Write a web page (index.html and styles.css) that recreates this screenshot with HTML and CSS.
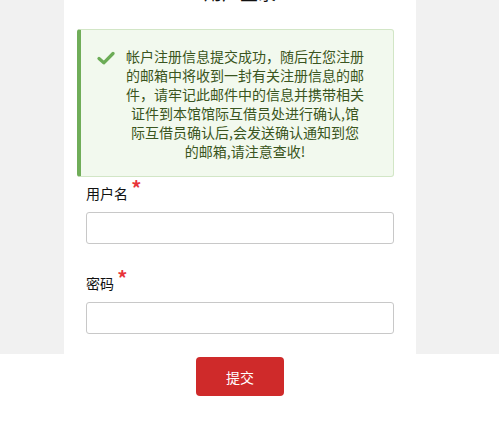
FILE: index.html
```html
<!DOCTYPE html>
<html>
  <head>
    <meta charset="UTF-8" />
    <meta name="viewport" content="width=device-width, initial-scale=1.0" />
    <title>用户登录</title>
    <link rel="stylesheet" href="styles.css">
  </head>
  <body>
    <div class="page">
      <div class="panel">
        <h3 class="title">用户登录</h3>
        <div class="alert">
          <svg class="alert-icon" width="18" height="14" viewBox="0 0 18 14">
            <path d="M2 7.5 L6.8 11.8 L16 2.5" fill="none" stroke="#6cac56" stroke-width="3.2" stroke-linecap="round" stroke-linejoin="round" />
          </svg>
          <p class="alert-text">帐户注册信息提交成功，随后在您注册的邮箱中将收到一封有关注册信息的邮件，请牢记此邮件中的信息并携带相关证件到本馆馆际互借员处进行确认,馆际互借员确认后,会发送确认通知到您的邮箱,请注意查收!</p>
        </div>
        <form class="login">
          <div class="field">
            <label for="username">用户名 <span class="req">*</span></label>
            <input id="username" type="text" />
          </div>
          <div class="field">
            <label for="password">密码 <span class="req">*</span></label>
            <input id="password" type="password" />
          </div>
        </form>
      </div>
    </div>
    <div class="actions">
      <button class="submit" type="button">提交</button>
    </div>
  </body>
</html>
```

FILE: styles.css
```css
body {
  margin: 0;
  font-family: "Noto Sans CJK SC", "Liberation Sans", sans-serif;
  font-size: 14px;
  color: #222;
  background: #fff;
}
.page {
  background: #f1f1f1;
  overflow: hidden;
}
.panel {
  width: 308px;
  margin-left: 64px;
  padding: 0 22px 20px;
  background: #fff;
}
.title {
  margin: -20px 0 25px;
  font-size: 18px;
  line-height: 24px;
  font-weight: normal;
  text-align: center;
  color: #111;
}
.alert {
  display: flex;
  align-items: flex-start;
  gap: 10px;
  margin-left: -9px;
  padding: 17px 24px 15px 16px;
  background: #f2f9ee;
  border: 1px solid #d2e6c6;
  border-left: 4px solid #70ad59;
  border-radius: 3px;
}
.alert-icon {
  flex: none;
  margin-top: 4px;
}
.alert-text {
  width: 240px;
  margin: 0;
  line-height: 19px;
  text-align: center;
  color: #3a5520;
}
.field {
  margin-top: 6px;
}
.field + .field {
  margin-top: 29px;
}
.field label {
  display: block;
  line-height: 20px;
  color: #111;
}
.req {
  position: relative;
  top: -3px;
  color: #e8343a;
  font-size: 20px;
  font-weight: bold;
  line-height: 0;
}
.field input {
  display: block;
  box-sizing: border-box;
  width: 100%;
  height: 32px;
  margin-top: 9px;
  border: 1px solid #c8c8c8;
  border-radius: 3px;
  background: #fff;
}
.actions {
  width: 352px;
  margin: 3px 0 0 64px;
  text-align: center;
}
.submit {
  width: 88px;
  height: 39px;
  border: none;
  border-radius: 4px;
  background: #cf2a2a;
  color: #fff;
  font-family: inherit;
  font-size: 14px;
}
```
